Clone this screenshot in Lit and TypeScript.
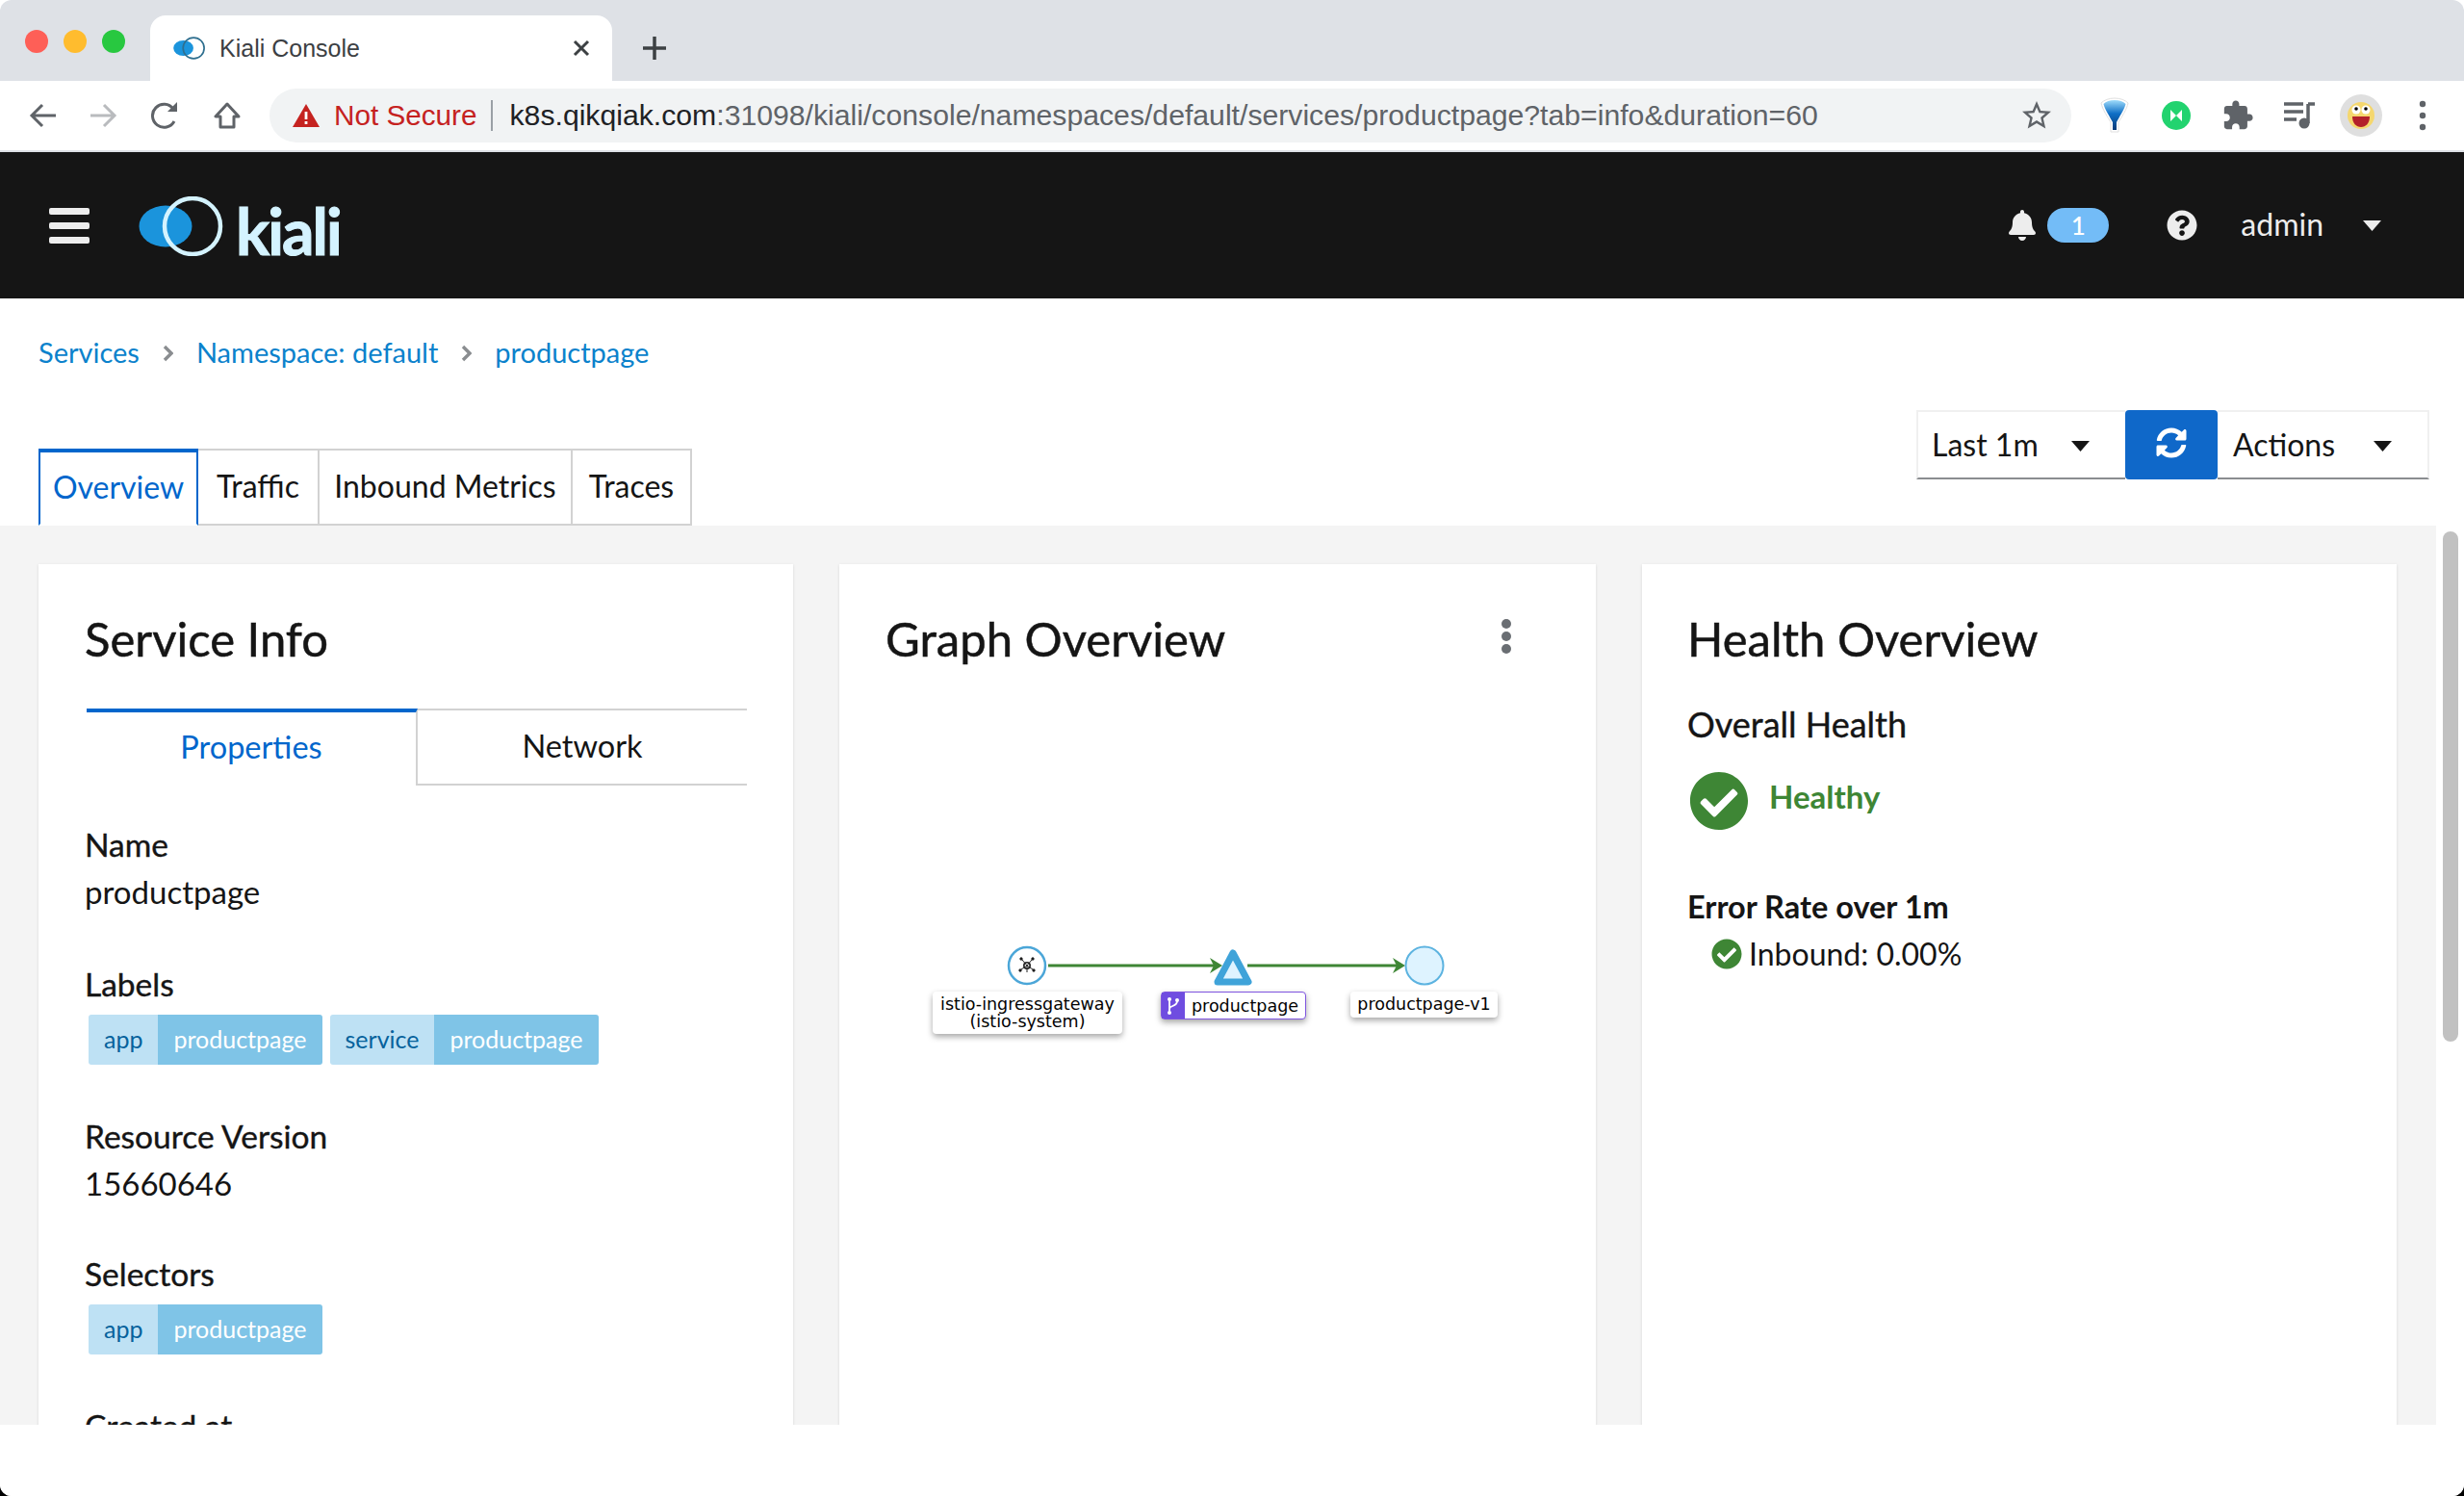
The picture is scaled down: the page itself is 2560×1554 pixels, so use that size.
import {LitElement, css, html, svg} from 'lit';
import {customElement} from 'lit/decorators.js';

const CHECK =
  'M504 256c0 136.967-111.033 248-248 248S8 392.967 8 256 119.033 8 256 8s248 111.033 248 248zM227.314 387.314l184-184c6.248-6.248 6.248-16.379 0-22.627l-22.627-22.627c-6.248-6.249-16.379-6.249-22.628 0L216 308.118l-70.059-70.059c-6.248-6.248-16.379-6.248-22.628 0l-22.627 22.627c-6.248 6.248-6.248 16.379 0 22.627l104 104c6.249 6.249 16.379 6.249 22.628 0z';
const SYNC =
  'M370.72 133.28C339.458 104.008 298.888 87.962 255.848 88c-77.458.068-144.328 53.178-162.791 126.85-1.344 5.363-6.122 9.15-11.651 9.15H24.103c-7.498 0-13.194-6.807-11.807-14.176C33.933 94.924 134.813 8 256 8c66.448 0 126.791 26.136 171.315 68.685L463.03 40.97C478.149 25.851 504 36.559 504 57.941V192c0 13.255-10.745 24-24 24H345.941c-21.382 0-32.09-25.851-16.971-40.971l41.75-41.749zM32 296h134.059c21.382 0 32.09 25.851 16.971 40.971l-41.75 41.75c31.262 29.273 71.835 45.319 114.876 45.28 77.418-.07 144.315-53.144 162.787-126.849 1.344-5.363 6.122-9.15 11.651-9.15h57.304c7.498 0 13.194 6.807 11.807 14.176C478.067 417.076 377.187 504 256 504c-66.448 0-126.791-26.136-171.315-68.685L48.97 471.03C33.851 486.149 8 475.441 8 454.059V320c0-13.255 10.745-24 24-24z';
const QUESTION =
  'M504 256c0 136.997-111.043 248-248 248S8 392.997 8 256C8 119.083 119.043 8 256 8s248 111.083 248 248zM262.655 90c-54.497 0-89.255 22.957-116.549 63.758-3.536 5.286-2.353 12.415 2.715 16.258l34.699 26.31c5.205 3.947 12.621 3.008 16.665-2.122 17.864-22.658 30.113-35.797 57.303-35.797 20.429 0 45.698 13.148 45.698 32.958 0 14.976-12.363 22.667-32.534 33.976C247.128 238.528 216 254.941 216 296v4c0 6.627 5.373 12 12 12h56c6.627 0 12-5.373 12-12v-1.333c0-28.462 83.186-29.647 83.186-106.667 0-58.002-60.165-102-116.531-102zM256 338c-25.365 0-46 20.635-46 46 0 25.364 20.635 46 46 46s46-20.636 46-46c0-25.365-20.635-46-46-46z';
const BELL =
  'M224 512c35.32 0 63.97-28.65 63.97-64H160.03c0 35.35 28.65 64 63.97 64zm215.39-149.71c-19.32-20.76-55.47-51.99-55.47-154.29 0-77.7-54.48-139.9-127.94-155.16V32c0-17.67-14.32-32-31.98-32s-31.98 14.33-31.98 32v20.84C118.56 68.1 64.08 130.3 64.08 208c0 102.3-36.15 133.53-55.47 154.29-6 6.45-8.66 14.16-8.61 21.71.11 16.4 12.98 32 32.1 32h383.8c19.12 0 32-15.6 32.1-32 .05-7.55-2.61-15.27-8.61-21.71z';
const PUZZLE =
  'M20.5 11H19V7c0-1.1-.9-2-2-2h-4V3.5C13 2.12 11.88 1 10.5 1S8 2.12 8 3.5V5H4c-1.1 0-1.99.9-1.99 2v3.8H3.5c1.49 0 2.7 1.21 2.7 2.7s-1.21 2.7-2.7 2.7H2V20c0 1.1.9 2 2 2h3.8v-1.5c0-1.49 1.21-2.7 2.7-2.7 1.49 0 2.7 1.21 2.7 2.7V22H17c1.1 0 2-.9 2-2v-4h1.5c1.38 0 2.5-1.12 2.5-2.5S21.88 11 20.5 11z';
const STAR =
  'M22 9.24l-7.19-.62L12 2 9.19 8.63 2 9.24l5.46 4.73L5.82 21 12 17.27 18.18 21l-1.63-7.03L22 9.24zM12 15.4l-3.76 2.27 1-4.28-3.32-2.88 4.38-.38L12 6.1l1.71 4.04 4.38.38-3.32 2.88 1 4.28L12 15.4z';

const kialiMark = (ink: string, ring: string) => svg`
  <ellipse cx="28" cy="31" rx="27.5" ry="21.5" fill="${ink}"></ellipse>
  <circle cx="56" cy="31" r="29" fill="none" stroke="${ring}" stroke-width="4.5"></circle>`;

@customElement('app-root')
export class AppRoot extends LitElement {
  static styles = css`
    :host {
      display: block;
      height: 1554px;
      background: linear-gradient(#fff 50%, #000 50%);
      font-family: 'Lato', 'Open Sans', sans-serif;
      color: #151515;
    }
    .window {
      height: 1554px;
      display: flex;
      flex-direction: column;
      overflow: hidden;
      background: #fff;
      border-radius: 12px;
    }
    /* browser chrome */
    .tabstrip {
      height: 84px;
      flex: none;
      background: #dee1e6;
      display: flex;
      align-items: flex-end;
      padding-left: 26px;
      font-family: 'Liberation Sans', sans-serif;
    }
    .lights {
      display: flex;
      gap: 16px;
      align-self: flex-start;
      margin-top: 31px;
      width: 130px;
    }
    .lights i {
      width: 24px;
      height: 24px;
      border-radius: 50%;
    }
    .tab {
      width: 480px;
      height: 68px;
      background: #fff;
      border-radius: 16px 16px 0 0;
      display: flex;
      align-items: center;
      padding: 0 22px 0 24px;
      box-sizing: border-box;
      font-size: 25px;
      color: #3c4043;
    }
    .tab svg.fav {
      width: 34px;
      height: 24px;
      margin-right: 14px;
    }
    .tab span {
      flex: 1;
    }
    .newtab {
      margin: 0 0 21px 31px;
      display: block;
    }
    .toolbar {
      height: 72px;
      flex: none;
      box-sizing: content-box;
      border-bottom: 2px solid #dee1e6;
      display: flex;
      align-items: center;
      padding-left: 12px;
      font-family: 'Liberation Sans', sans-serif;
    }
    .slot {
      width: 64px;
      height: 44px;
      flex: none;
      display: flex;
      align-items: center;
      justify-content: center;
    }
    .omnibox {
      width: 1872px;
      height: 56px;
      margin: 0 13px 0 12px;
      flex: none;
      border-radius: 28px;
      background: #f1f3f4;
      display: flex;
      align-items: center;
      padding-left: 24px;
      box-sizing: border-box;
      font-size: 30.2px;
      color: #5f6368;
      white-space: nowrap;
    }
    .omnibox .warn {
      width: 28px;
      height: 24px;
      margin-right: 15px;
    }
    .omnibox .insecure {
      color: #c5221f;
      font-size: 29.7px;
    }
    .omnibox .sep {
      width: 2px;
      height: 32px;
      background: #9aa0a6;
      margin: 0 18px 0 14px;
    }
    .omnibox .host {
      color: #202124;
    }
    .omnibox .url {
      flex: 1;
    }
    .omnibox .star {
      width: 36px;
      height: 36px;
      margin-right: 18px;
    }
    .avatar {
      width: 44px;
      height: 44px;
      border-radius: 50%;
      background: #dfdfdf;
      display: flex;
      align-items: center;
      justify-content: center;
    }
    /* kiali masthead */
    .masthead {
      height: 152px;
      flex: none;
      background: #151515;
      display: flex;
      align-items: center;
      padding-left: 51px;
      color: #ededed;
    }
    .burger {
      width: 42px;
      display: flex;
      flex-direction: column;
      gap: 8px;
    }
    .burger i {
      height: 7px;
      background: #ededed;
      border-radius: 2px;
    }
    .logo {
      margin: 2px 0 0 51px;
      width: 90px;
      height: 62px;
    }
    .wordmark {
      margin: 12px 0 0 11px;
      font-size: 66px;
      font-weight: 700;
      letter-spacing: -2px;
      color: #d4f3ff;
      line-height: 1;
      -webkit-text-stroke: 1px #d4f3ff;
    }
    .spacer {
      flex: 1;
    }
    .bell {
      width: 28px;
      height: 32px;
      fill: #ededed;
    }
    .count {
      width: 64px;
      height: 36px;
      margin-left: 12px;
      border-radius: 18px;
      background: #73bcf7;
      color: #fff;
      font-size: 26px;
      font-weight: 500;
      text-align: center;
      line-height: 36px;
    }
    .help {
      width: 32px;
      height: 32px;
      fill: #ededed;
      margin-left: 60px;
    }
    .user {
      font-size: 32px;
      margin: -4px 0 0 45px;
    }
    .caret {
      width: 19px;
      height: 11px;
      margin: 0 86px 0 41px;
    }
    /* page head */
    .pagehead {
      height: 236px;
      flex: none;
      padding: 0 36px 0 40px;
      box-sizing: border-box;
    }
    .crumbs {
      height: 111px;
      margin-bottom: 1px;
      display: flex;
      align-items: center;
      font-size: 29px;
      color: #0b82cc;
    }
    .crumbs svg {
      width: 11px;
      height: 18px;
      margin: 2px 24px 0;
    }
    .headrow {
      height: 124px;
      display: flex;
      justify-content: space-between;
      align-items: flex-end;
    }
    .tabs {
      display: flex;
      height: 80px;
      font-size: 32px;
      box-sizing: border-box;
    }
    .tabs div {
      display: flex;
      align-items: center;
      justify-content: center;
      box-sizing: border-box;
      border: 2px solid #d2d2d2;
      border-left-width: 0;
      padding-bottom: 4px;
    }
    .tabs .on {
      color: #0066cc;
      border: 2px solid #0066cc;
      border-top-width: 4px;
      border-bottom-color: #fff;
    }
    .controls {
      align-self: flex-start;
      margin-top: 4px;
      display: flex;
      height: 72px;
      font-size: 32px;
    }
    .select {
      border: 2px solid #f0f0f0;
      border-bottom-color: #8a8d90;
      border-right: 0;
      box-sizing: border-box;
      display: flex;
      align-items: center;
      justify-content: space-between;
      padding: 0 37px 2px 14px;
    }
    .select.last {
      border-right: 2px solid #f0f0f0;
      border-left: 0;
      padding-left: 16px;
    }
    .select svg {
      width: 19px;
      height: 11px;
      margin-top: 4px;
    }
    .refresh {
      width: 96px;
      background: #0f68c9;
      border-radius: 4px;
      display: flex;
      align-items: center;
      justify-content: center;
    }
    .refresh svg {
      width: 32px;
      height: 32px;
      margin-top: -4px;
      fill: #fff;
    }
    /* content */
    .content {
      height: 934px;
      flex: none;
      display: flex;
    }
    .cards {
      width: 2531px;
      flex: none;
      background: #f4f4f4;
      padding: 40px 0 0 40px;
      box-sizing: border-box;
      display: grid;
      grid-template-columns: 784px 786px 784px;
      gap: 48px;
      overflow: hidden;
    }
    .track {
      flex: 1;
      padding: 6px 6px 0 7px;
    }
    .thumb {
      height: 530px;
      border-radius: 8px;
      background: #c1c1c1;
    }
    .card {
      min-width: 0;
      height: 1100px;
      background: #fff;
      box-shadow: 0 1px 3px rgba(3, 3, 3, 0.12);
      padding: 0 48px;
      box-sizing: border-box;
    }
    .card.health {
      padding-left: 47px;
    }
    .card h2 {
      margin: 0;
      padding-top: 49px;
      font-size: 49px;
      line-height: 56px;
      font-weight: 400;
      -webkit-text-stroke: 0.5px currentColor;
    }
    .titlebar {
      display: flex;
      justify-content: space-between;
    }
    .kebab {
      width: 10px;
      margin: 57px 40px 0 0;
      display: flex;
      flex-direction: column;
      gap: 3px;
    }
    .kebab i {
      width: 10px;
      height: 10px;
      border-radius: 50%;
      background: #6a6e73;
    }
    .subtabs {
      display: flex;
      margin: 45px 0 0 2px;
      height: 80px;
      font-size: 32.5px;
    }
    .subtabs div {
      flex: 1;
      display: flex;
      align-items: center;
      justify-content: center;
      box-sizing: border-box;
      border-top: 2px solid #d2d2d2;
      border-bottom: 2px solid #d2d2d2;
      padding-bottom: 3px;
    }
    .subtabs .on {
      color: #0066cc;
      border-top: 4px solid #0066cc;
      border-bottom: 0;
      border-right: 2px solid #d2d2d2;
      padding-bottom: 5px;
    }
    dl {
      margin: 41px 0 0;
    }
    dt {
      font-size: 33.500px;
      line-height: 40px;
      font-weight: 400;
      -webkit-text-stroke: 0.4px currentColor;
    }
    dd {
      margin: 9px 0 0;
      font-size: 33px;
      line-height: 40px;
      font-weight: 400;
    }
    dd + dt {
      margin-top: 54px;
    }
    dt.second {
      margin-top: 56px;
    }
    dd.badges {
      margin-top: 12px;
      display: flex;
      gap: 8px;
      padding-left: 4px;
      font-size: 25px;
    }
    .badge {
      display: flex;
      height: 52px;
      line-height: 50px;
      border-radius: 3px;
      overflow: hidden;
    }
    .badge b {
      font-weight: 400;
      padding: 0 16px;
    }
    .badge .k {
      background: #bee1f4;
      color: #06629c;
    }
    .badge .v {
      background: #7fc4e7;
      color: #fff;
    }
    h3 {
      margin: 39px 0 0;
      font-size: 36px;
      line-height: 44px;
      font-weight: 400;
      -webkit-text-stroke: 0.4px currentColor;
    }
    .overall {
      margin-top: 27px;
      display: flex;
      gap: 21px;
      margin-left: 2px;
      color: #3e8635;
      font-size: 33px;
      font-weight: 700;
    }
    .overall svg {
      width: 62px;
      height: 62px;
      fill: #3e8635;
    }
    .overall span {
      margin-top: 6px;
    }
    .rate {
      margin-top: 59px;
      font-size: 32.5px;
      line-height: 40px;
      font-weight: 700;
    }
    .inbound {
      margin: 9px 0 0 25px;
      font-size: 32px;
      line-height: 40px;
      display: flex;
      align-items: center;
      gap: 7px;
    }
    .inbound svg {
      width: 32px;
      height: 32px;
      fill: #3e8635;
    }
    /* graph canvas */
    .graph {
      position: relative;
      height: 1px;
    }
    .graph svg.edges {
      position: absolute;
      left: 0;
      top: 0;
      overflow: visible;
    }
    .node-label {
      position: absolute;
      background: #fff;
      border-radius: 4px;
      box-shadow: 0 3px 6px rgba(0, 0, 0, 0.35);
      font-family: 'DejaVu Sans', sans-serif;
      font-size: 17.5px;
      line-height: 18px;
      text-align: center;
      box-sizing: border-box;
      white-space: nowrap;
      color: #030303;
    }
    .node-label.plain {
      padding-top: 4px;
    }
    .node-label.svc {
      display: flex;
      border: 1px solid #7f55e0;
      align-items: center;
    }
    .node-label.svc .tag {
      width: 24px;
      align-self: stretch;
      background: #6f4de0;
      display: flex;
      align-items: center;
      justify-content: center;
    }
    .node-label.svc span {
      flex: 1;
    }
    .footer {
      flex: 1;
      background: #fff;
    }
  `;

  renderBadge(k: string, v: string) {
    return html`<div class="badge"><b class="k">${k}</b><b class="v">${v}</b></div>`;
  }

  renderChrome() {
    return html`
      <div class="tabstrip">
        <div class="lights">
          <i style="background:#fe5f57"></i><i style="background:#ffbc2e"></i><i style="background:#28c840"></i>
        </div>
        <div class="tab">
          <svg class="fav" viewBox="0 0 90 62">${kialiMark('#1b94dc', '#2f6f8f')}</svg>
          <span>Kiali Console</span>
          <svg width="20" height="20" viewBox="0 0 20 20"><path d="M3 3l14 14M17 3L3 17" stroke="#3c4043" stroke-width="3"></path></svg>
        </div>
        <svg class="newtab" width="26" height="26" viewBox="0 0 26 26"><path d="M13 1v24M1 13h24" stroke="#3c4043" stroke-width="3.5"></path></svg>
      </div>
      <div class="toolbar">
        <div class="slot"><svg width="28" height="26" viewBox="0 0 28 26"><path d="M14 2L3 13l11 11M3 13h25" fill="none" stroke="#5f6368" stroke-width="3"></path></svg></div>
        <div class="slot"><svg width="28" height="26" viewBox="0 0 28 26"><path d="M14 2l11 11-11 11M25 13H0" fill="none" stroke="#b9bbbe" stroke-width="3"></path></svg></div>
        <div class="slot"><svg width="30" height="28" viewBox="0 0 30 28"><path d="M24 20a12 12 0 1 1-1-13" fill="none" stroke="#5f6368" stroke-width="3"></path><path d="M27 0v10H17z" fill="#5f6368"></path></svg></div>
        <div class="slot"><svg width="28" height="28" viewBox="0 0 28 28"><path d="M14 2L2 15h5v11h14V15h5z" fill="none" stroke="#5f6368" stroke-width="3" stroke-linejoin="round"></path></svg></div>
        <div class="omnibox">
          <svg class="warn" viewBox="0 0 28 24"><path d="M14 0l14 24H0z" fill="#c5221f"></path><path d="M12.6 8h2.8v8h-2.8zM12.6 18h2.8v3h-2.8z" fill="#fff"></path></svg>
          <span class="insecure">Not Secure</span>
          <i class="sep"></i>
          <span class="url"><span class="host">k8s.qikqiak.com</span>:31098/kiali/console/namespaces/default/services/productpage?tab=info&amp;duration=60</span>
          <svg class="star" viewBox="0 0 24 24"><path d="${STAR}" fill="#5f6368"></path></svg>
        </div>
        <div class="slot">
          <svg width="30" height="38" viewBox="0 0 30 38">
            <defs><linearGradient id="funnel" x1="0" y1="0" x2="0" y2="1"><stop offset="0" stop-color="#9fdcfb"></stop><stop offset="0.45" stop-color="#0f6fc6"></stop><stop offset="1" stop-color="#063a78"></stop></linearGradient></defs>
            <path d="M15 1C9 1 4 3 1 6c1 6 7 15 10 20v10h8V26c3-5 9-14 10-20-3-3-8-5-14-5z" fill="#fff" stroke="#e0e0e0"></path>
            <path d="M15 3C10 3 6 4.500 3.500 7c1 5 7 14 9.500 19v8h4v-8c2.500-5 8.500-14 9.500-19C24 4.500 20 3 15 3z" fill="url(#funnel)"></path>
          </svg>
        </div>
        <div class="slot"><svg width="30" height="30" viewBox="0 0 30 30"><circle cx="15" cy="15" r="15" fill="#22d36f"></circle><path d="M9 9v12l6-6 6 6V9l-6 6z" fill="#fff"></path></svg></div>
        <div class="slot"><svg width="34" height="34" viewBox="0 0 24 24"><path d="${PUZZLE}" fill="#5f6368"></path></svg></div>
        <div class="slot"><svg width="32" height="28" viewBox="0 0 32 28"><path d="M0 2h20M0 10h20M0 18h13" stroke="#5f6368" stroke-width="3.5"></path><path d="M25 2v20" stroke="#5f6368" stroke-width="3.5"></path><circle cx="21" cy="22" r="5.5" fill="#5f6368"></circle><path d="M25 2h7" stroke="#5f6368" stroke-width="3.5"></path></svg></div>
        <div class="slot">
          <div class="avatar">
            <svg width="30" height="30" viewBox="0 0 30 30">
              <circle cx="15" cy="15" r="14" fill="#f5d76e"></circle>
              <circle cx="10" cy="9" r="4.5" fill="#fff"></circle><circle cx="20" cy="9" r="4.5" fill="#fff"></circle>
              <circle cx="10" cy="8" r="1.8"></circle><circle cx="20" cy="8" r="1.8"></circle>
              <path d="M6 16h18c0 7-4 11-9 11s-9-4-9-11z" fill="#b3202a"></path>
            </svg>
          </div>
        </div>
        <div class="slot"><svg width="8" height="32" viewBox="0 0 8 32"><circle cx="4" cy="4" r="3.2" fill="#5f6368"></circle><circle cx="4" cy="16" r="3.2" fill="#5f6368"></circle><circle cx="4" cy="28" r="3.2" fill="#5f6368"></circle></svg></div>
      </div>
    `;
  }

  renderMasthead() {
    return html`
      <div class="masthead">
        <div class="burger"><i></i><i></i><i></i></div>
        <svg class="logo" viewBox="0 0 90 62">${kialiMark('#1b94dc', '#d4f3ff')}</svg>
        <span class="wordmark">kiali</span>
        <span class="spacer"></span>
        <svg class="bell" viewBox="0 0 448 512"><path d="${BELL}"></path></svg>
        <span class="count">1</span>
        <svg class="help" viewBox="0 0 512 512"><path d="${QUESTION}"></path></svg>
        <span class="user">admin</span>
        <svg class="caret" viewBox="0 0 19 11"><path d="M0 0h19l-9.5 11z" fill="#ededed"></path></svg>
      </div>
    `;
  }

  renderPageHead() {
    const chevron = html`<svg viewBox="0 0 11 18"><path d="M2 2l7 7-7 7" fill="none" stroke="#8a8d90" stroke-width="3.4"></path></svg>`;
    const caret = html`<svg viewBox="0 0 19 11"><path d="M0 0h19l-9.5 11z" fill="#151515"></path></svg>`;
    return html`
      <div class="pagehead">
        <div class="crumbs">
          <span>Services</span>${chevron}<span>Namespace: default</span>${chevron}<span>productpage</span>
        </div>
        <div class="headrow">
          <div class="tabs">
            <div class="on" style="width:166px">Overview</div>
            <div style="width:126px">Traffic</div>
            <div style="width:263px">Inbound Metrics</div>
            <div style="width:124px">Traces</div>
          </div>
          <div class="controls">
            <div class="select" style="width:217px"><span>Last 1m</span>${caret}</div>
            <div class="refresh"><svg viewBox="0 0 512 512"><path d="${SYNC}"></path></svg></div>
            <div class="select last" style="width:220px"><span>Actions</span>${caret}</div>
          </div>
        </div>
      </div>
    `;
  }

  renderGraph() {
    // canvas origin is the card's padding box below the title
    return html`
      <div class="graph">
        <svg class="edges" width="700" height="400">
          <g transform="translate(-920 -690)">
            <circle cx="1067" cy="1002" r="19" fill="#fff" stroke="#4ba6d8" stroke-width="2.5"></circle>
            <g fill="#111" stroke="#222" stroke-width="1">
              <circle cx="1067" cy="1002" r="3.2" fill="none" stroke-width="1.6"></circle>
              <path d="M1067 1002l-5-6M1067 1002l5-6M1067 1002l-6 4M1067 1002l6 4M1067 1002v7" fill="none"></path>
              <circle cx="1061" cy="995" r="1.2"></circle><circle cx="1073" cy="995" r="1.2"></circle>
              <circle cx="1060" cy="1007" r="1.2"></circle><circle cx="1074" cy="1007" r="1.2"></circle>
            </g>
            <path d="M1089 1002h178M1296 1002h160" stroke="#3e8635" stroke-width="3"></path>
            <path d="M1270 1002l-13-8 4 8-4 8zM1460 1002l-13-8 4 8-4 8z" fill="#3e8635"></path>
            <path d="M1281 989l16 30h-32z" fill="#def3ff" stroke="#3fa3d9" stroke-width="7" stroke-linejoin="round"></path>
            <circle cx="1480" cy="1002" r="19.5" fill="#def3ff" stroke="#5cb3e0" stroke-width="2"></circle>
          </g>
        </svg>
        <div class="node-label plain" style="left:49px;top:339px;width:197px;height:44px">istio-ingressgateway<br />(istio-system)</div>
        <div class="node-label svc" style="left:286px;top:339px;width:151px;height:29px">
          <i class="tag">
            <svg width="14" height="20" viewBox="0 0 14 20"><path d="M3 3v14M3 13c0-4 8-2 8-8" fill="none" stroke="#fff" stroke-width="1.8"></path><circle cx="3" cy="3" r="2" fill="#fff"></circle><circle cx="3" cy="17" r="2" fill="#fff"></circle><circle cx="11" cy="4" r="2" fill="#fff"></circle></svg>
          </i>
          <span>productpage</span>
        </div>
        <div class="node-label plain" style="left:483px;top:339px;width:153px;height:27px">productpage-v1</div>
      </div>
    `;
  }

  render() {
    return html`
      <div class="window">
        ${this.renderChrome()} ${this.renderMasthead()} ${this.renderPageHead()}
        <div class="content">
          <div class="cards">
            <section class="card">
              <h2>Service Info</h2>
              <div class="subtabs"><div class="on">Properties</div><div>Network</div></div>
              <dl>
                <dt>Name</dt>
                <dd>productpage</dd>
                <dt class="second">Labels</dt>
                <dd class="badges">${this.renderBadge('app', 'productpage')}${this.renderBadge('service', 'productpage')}</dd>
                <dt>Resource Version</dt>
                <dd>15660646</dd>
                <dt>Selectors</dt>
                <dd class="badges">${this.renderBadge('app', 'productpage')}</dd>
                <dt>Created at</dt>
                <dd></dd>
              </dl>
            </section>
            <section class="card">
              <div class="titlebar">
                <h2>Graph Overview</h2>
                <div class="kebab"><i></i><i></i><i></i></div>
              </div>
              ${this.renderGraph()}
            </section>
            <section class="card health">
              <h2>Health Overview</h2>
              <h3>Overall Health</h3>
              <div class="overall">
                <svg viewBox="0 0 512 512"><path d="${CHECK}"></path></svg>
                <span>Healthy</span>
              </div>
              <div class="rate">Error Rate over 1m</div>
              <div class="inbound">
                <svg viewBox="0 0 512 512"><path d="${CHECK}"></path></svg>
                <span>Inbound: 0.00%</span>
              </div>
            </section>
          </div>
          <div class="track"><div class="thumb"></div></div>
        </div>
        <div class="footer"></div>
      </div>
    `;
  }
}
